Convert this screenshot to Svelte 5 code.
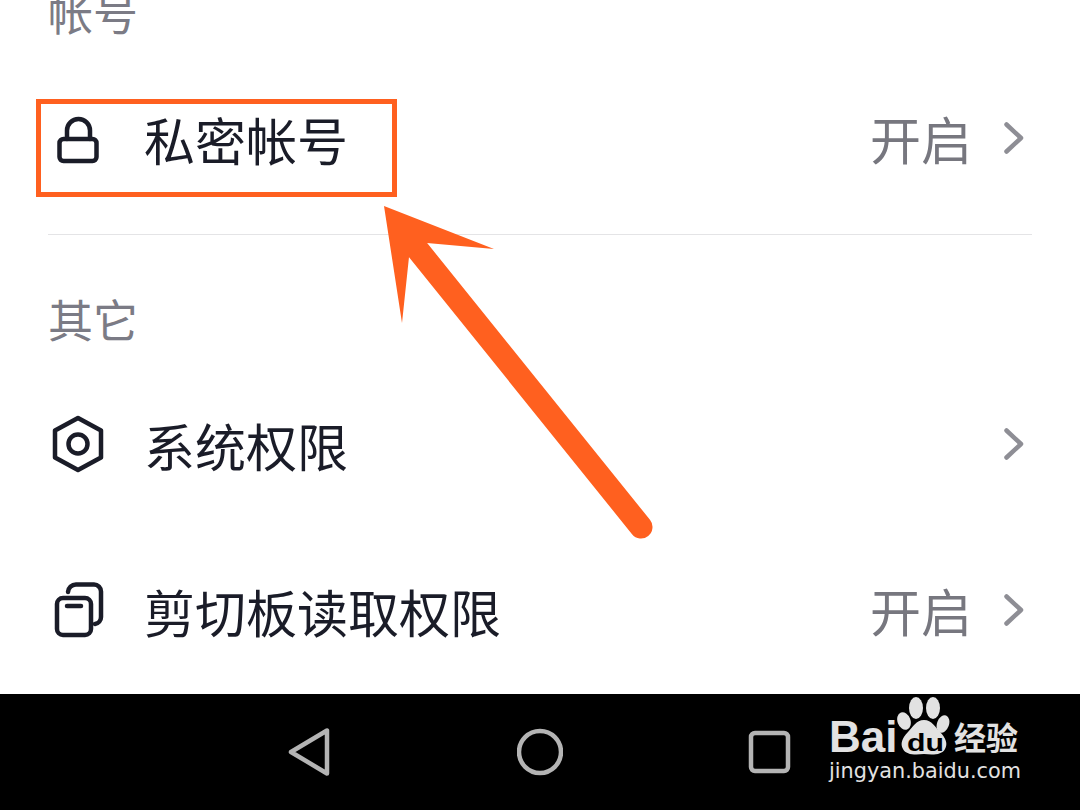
<script>
  const other = [
    { label: "系统权限", icon: "hex", value: "" },
    { label: "剪切板读取权限", icon: "copy", value: "开启" }
  ];
</script>

{#snippet chevron()}
  <svg class="chevron" width="26" height="40" viewBox="0 0 26 40">
    <path d="M4.500 6.500 19 20 4.500 33.500" />
  </svg>
{/snippet}

{#snippet rowIcon(name)}
  <svg class="icon" width="60" height="60" viewBox="0 0 60 60">
    {#if name === "lock"}
      <rect x="11.500" y="31" width="37" height="22" rx="4" />
      <path d="M19 31v-8.500a11.500 11.500 0 0 1 23 0V31" />
    {:else if name === "hex"}
      <path d="M30 4 53 16.500v27L30 56 7 43.500V16.500Z" />
      <circle cx="30" cy="30" r="9.500" />
    {:else}
      <rect x="9" y="18" width="34" height="37" rx="6" />
      <path d="M20 12a8 8 0 0 1 8-7.500h18a7 7 0 0 1 7 7V37a7 7 0 0 1-6 7" />
      <path d="M19 26h14" />
    {/if}
  </svg>
{/snippet}

{#snippet row(item)}
  <div class="row">
    {@render rowIcon(item.icon)}
    <span class="label">{item.label}</span>
    {#if item.value}<span class="value">{item.value}</span>{/if}
    {@render chevron()}
  </div>
{/snippet}

<div class="screen">
  <main class="content">
    <section class="account">
      <h2>帐号</h2>
      {@render row({ label: "私密帐号", icon: "lock", value: "开启" })}
    </section>
    <section class="other">
      <h2>其它</h2>
      {#each other as item}
        {@render row(item)}
      {/each}
    </section>
  </main>

  <nav class="navbar">
    <svg width="46" height="50" viewBox="0 0 46 50"><path d="M5 25 41 3.500V46.500Z" /></svg>
    <svg width="46" height="50" viewBox="0 0 46 50"><circle cx="23" cy="25" r="21" /></svg>
    <svg width="46" height="50" viewBox="0 0 46 50"><rect x="3" y="6" width="37" height="38" rx="4" /></svg>
  </nav>

  <!-- annotation drawn over the screenshot -->
  <div class="highlight"></div>
  <svg class="arrow" width="1080" height="810" viewBox="0 0 1080 810">
    <path class="shaft" d="M418 250 641 527" />
    <path class="head" d="M384 206 494 249 427 243 409 257 402 323Z" />
  </svg>

  <!-- watermark -->
  <div class="watermark">
    <div class="brand">
      <span class="bai">Bai</span>
      <svg class="paw" width="54" height="62" viewBox="0 0 54 62">
        <ellipse cx="19" cy="14" rx="7" ry="11" />
        <ellipse cx="36" cy="14" rx="7" ry="11" />
        <ellipse cx="7" cy="27" rx="6.500" ry="9" transform="rotate(-20 7 27)" />
        <ellipse cx="46" cy="30" rx="6" ry="9" transform="rotate(20 46 30)" />
        <path d="M27 26c8 0 11 7 16 12 6 6 8 12 5 17-3 6-12 6-21 5-9 1-18 1-21-5-3-5-1-11 5-17 5-5 8-12 16-12Z" />
        <text x="10" y="57" textLength="37" lengthAdjust="spacingAndGlyphs">du</text>
      </svg>
      <span class="jy">经验</span>
    </div>
    <div class="url">jingyan.baidu.com</div>
  </div>
</div>

<style>
  :global(body) {
    margin: 0;
    background: #fff;
  }
  .screen {
    position: relative;
    width: 1080px;
    height: 810px;
    overflow: hidden;
    display: flex;
    flex-direction: column;
    font-family: "Noto Sans CJK SC", "Noto Sans", sans-serif;
  }
  .content {
    height: 694px;
    padding: 0 48px;
    box-sizing: border-box;
    overflow: hidden;
    flex: none;
    background: #fff;
  }
  h2 {
    margin: 0;
    font-size: 45px;
    font-weight: 400;
    line-height: 60px;
    color: #7b7b85;
  }
  .account {
    margin-top: -18px;
    padding-bottom: 13px;
    border-bottom: 1px solid #e4e4e6;
  }
  .account h2 {
    margin-bottom: 13px;
  }
  .other {
    margin-top: 54px;
  }
  .other h2 {
    margin-bottom: 12px;
  }
  .row {
    display: flex;
    align-items: center;
    height: 166px;
  }
  .icon {
    flex: none;
    fill: none;
    stroke: #1a1c28;
    stroke-width: 4.500;
    stroke-linejoin: round;
    stroke-linecap: round;
  }
  .label {
    margin-left: 36px;
    padding-top: 2px;
    font-size: 51px;
    line-height: 60px;
    color: #1a1c28;
  }
  .value {
    margin-left: auto;
    font-size: 51px;
    line-height: 60px;
    color: #77777f;
  }
  .chevron {
    flex: none;
    margin-left: 30px;
    margin-right: 4px;
    fill: none;
    stroke: #8e8e95;
    stroke-width: 4.500;
    stroke-linecap: round;
    stroke-linejoin: round;
  }
  .label + .chevron {
    margin-left: auto;
  }
  .navbar {
    flex: 1;
    background: #000;
    display: flex;
    align-items: center;
    gap: 185px;
    padding-left: 286px;
  }
  .navbar svg {
    fill: none;
    stroke: #b4b4b4;
    stroke-width: 4.500;
    stroke-linejoin: round;
  }
  .highlight {
    position: absolute;
    left: 36px;
    top: 99px;
    width: 351px;
    height: 88px;
    border: 5px solid #ff601f;
  }
  .arrow {
    position: absolute;
    left: 0;
    top: 0;
    pointer-events: none;
  }
  .shaft {
    fill: none;
    stroke: #ff601f;
    stroke-width: 23px;
    stroke-linecap: round;
  }
  .head {
    fill: #ff601f;
  }
  .watermark {
    position: absolute;
    left: 829px;
    top: 694px;
    width: 195px;
    color: #e2e2e2;
  }
  .brand {
    display: flex;
    align-items: flex-end;
    height: 62px;
  }
  .bai {
    font-family: "Liberation Sans", sans-serif;
    font-weight: 700;
    font-size: 44px;
    line-height: 48px;
    width: 68px;
    flex: none;
    margin-bottom: -5px;
  }
  .paw {
    flex: none;
    fill: #e2e2e2;
  }
  .paw text {
    font-family: "Liberation Sans", sans-serif;
    font-weight: 700;
    font-size: 23px;
    fill: #000;
  }
  .jy {
    margin-left: 3px;
    font-size: 32px;
    font-weight: 700;
    line-height: 40px;
    white-space: nowrap;
  }
  .url {
    margin-top: 2px;
    font-family: "DejaVu Sans", sans-serif;
    font-size: 20.800px;
    line-height: 26px;
    white-space: nowrap;
  }
</style>
